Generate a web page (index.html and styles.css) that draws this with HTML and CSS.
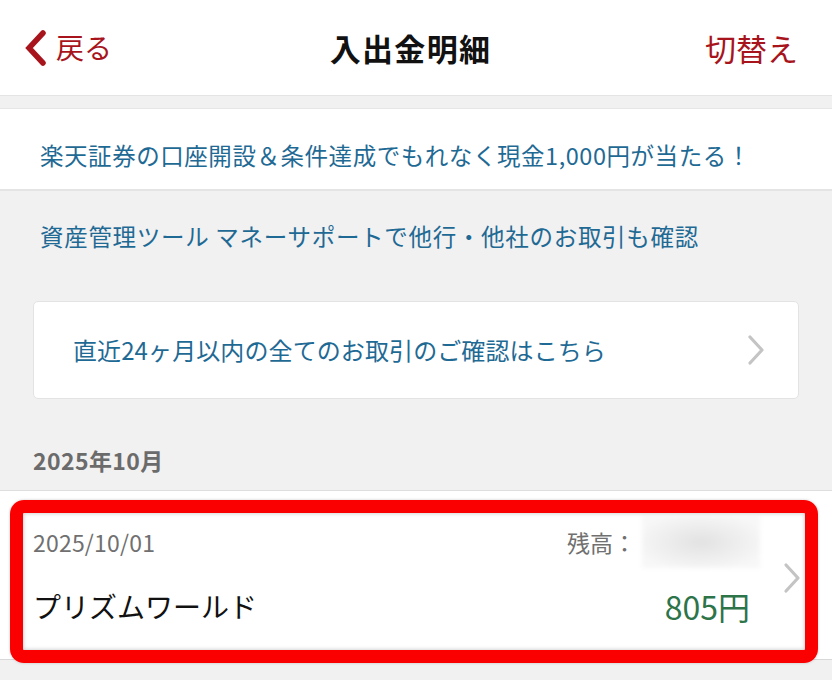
FILE: index.html
```html
<!DOCTYPE html>
<html lang="ja">
<head>
<meta charset="utf-8">
<title>入出金明細</title>
<link rel="stylesheet" href="styles.css">
</head>
<body>
<div class="page">
  <header class="topbar">
    <a class="back">
      <svg class="back-icon" width="24" height="36" viewBox="0 0 24 36"><path d="M20 3 L6 18 L20 33" fill="none" stroke="#a8141c" stroke-width="5.5" stroke-linecap="round" stroke-linejoin="miter"/></svg>
      <span>戻る</span>
    </a>
    <h1 class="title">入出金明細</h1>
    <a class="switch">切替え</a>
  </header>
  <section class="promo">
    <a class="link">楽天証券の口座開設＆条件達成でもれなく現金1,000円が当たる！</a>
  </section>
  <section class="tools">
    <a class="link tool-link">資産管理ツール マネーサポートで他行・他社のお取引も確認</a>
    <a class="card">
      <span class="link">直近24ヶ月以内の全てのお取引のご確認はこちら</span>
      <svg class="chev" width="20" height="32" viewBox="0 0 20 32"><path d="M4 3 L16 16 L4 29" fill="none" stroke="#c4c4c4" stroke-width="3.2" stroke-linecap="round" stroke-linejoin="round"/></svg>
    </a>
    <h2 class="month">2025年10月</h2>
  </section>
  <ul class="list">
    <li class="tx">
      <div class="tx-main">
        <div class="tx-row">
          <span class="date">2025/10/01</span>
          <span class="bal">残高：<span class="blur"></span></span>
        </div>
        <div class="tx-row tx-row2">
          <span class="name">プリズムワールド</span>
          <span class="amt">805円</span>
        </div>
      </div>
      <svg class="chev tx-chev" width="20" height="32" viewBox="0 0 20 32"><path d="M4 3 L16 16 L4 29" fill="none" stroke="#c4c4c4" stroke-width="3.2" stroke-linecap="round" stroke-linejoin="round"/></svg>
    </li>
  </ul>
  <div class="highlight"></div>
</div>
</body>
</html>
```

FILE: styles.css
```css
* { box-sizing: border-box; }
html, body { margin: 0; padding: 0; }
body {
  background: #f2f1f2;
  font-family: "Noto Sans CJK JP", "Noto Sans", sans-serif;
  width: 832px;
  height: 680px;
  overflow: hidden;
}
.page { position: relative; width: 832px; height: 680px; }

.topbar {
  height: 96px;
  background: #fff;
  display: grid;
  grid-template-columns: 1fr auto 1fr;
  align-items: center;
  padding: 0 34px 0 23px;
  border-bottom: 1px solid #e4e4e4;
}
.back {
  display: flex;
  align-items: center;
  gap: 9px;
  color: #a8141c;
  font-size: 28px;
  line-height: 1;
}
.back span { margin-top: -2px; }
.title {
  margin: 0;
  font-size: 31px;
  font-weight: 700;
  color: #111;
  line-height: 1;
  letter-spacing: 1.3px;
}
.switch {
  justify-self: end;
  color: #a8141c;
  font-size: 31px;
  line-height: 1;
}

.link { color: #1f6a94; font-size: 23.5px; line-height: 34px; letter-spacing: 0.5px; }

.promo {
  margin-top: 12px;
  background: #fff;
  border-top: 1px solid #e6e6e6;
  border-bottom: 2px solid #e4e4e4;
  height: 83px;
  padding: 29px 40px 0;
}
.promo .link { display: block; letter-spacing: 0.55px; }

.tools {
  padding: 28px 33px 0;
  display: flex;
  flex-direction: column;
}
.tool-link { display: block; padding-left: 7px; letter-spacing: 0.7px; }
.card {
  margin-top: 48px;
  height: 98px;
  background: #fff;
  border: 1px solid #e3e3e3;
  border-radius: 5px;
  display: flex;
  align-items: center;
  justify-content: space-between;
  padding: 0 32px 0 39px;
}
.card .link { font-size: 24px; letter-spacing: 0.1px; }
.month {
  margin: 46px 0 0;
  font-size: 23px;
  font-weight: 700;
  color: #6b6b6b;
  line-height: 30px;
  letter-spacing: 0.4px;
}

.list {
  list-style: none;
  margin: 15px 0 0;
  padding: 0;
  background: #fff;
  border-top: 1px solid #dedede;
  border-bottom: 1px solid #d8d8d8;
}
.tx {
  height: 168px;
  display: flex;
  align-items: center;
  padding: 0 30px 0 33px;
}
.tx-main { flex: 1; margin-top: -8px; }
.tx-row {
  display: flex;
  justify-content: space-between;
  align-items: center;
  padding-right: 22px;
}
.date { font-size: 23px; color: #707070; line-height: 30px; letter-spacing: 0.2px; }
.bal {
  display: flex;
  align-items: center;
  font-size: 23px;
  color: #707070;
}
.blur {
  display: inline-block;
  width: 118px;
  height: 52px;
  margin-left: 6px;
  background: radial-gradient(ellipse at center, #e2e2e2 0%, #eeeeee 45%, #f7f7f7 80%);
  filter: blur(2px);
}
.tx-row2 { margin-top: 18px; }
.name { font-size: 28px; color: #111; line-height: 40px; }
.amt { font-size: 32px; color: #2d7449; line-height: 40px; margin-right: 10px; }
.tx-chev { margin-top: 6px; }

.highlight {
  position: absolute;
  left: 10px;
  top: 500px;
  width: 808px;
  height: 163px;
  border: 13px solid #fb0000;
  border-radius: 14px;
  box-shadow: inset 0 0 4px rgba(0,0,0,0.25), 0 0 3px rgba(0,0,0,0.2);
  pointer-events: none;
}
```
